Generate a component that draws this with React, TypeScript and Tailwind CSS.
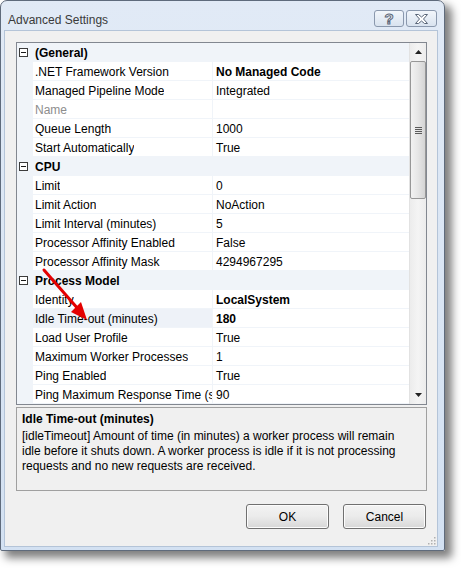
import React from "react";

type Row = { name: string; value: string; bold?: boolean; disabled?: boolean; selected?: boolean };
type Section = { title: string; rows: Row[] };

const sections: Section[] = [
  {
    title: "(General)",
    rows: [
      { name: ".NET Framework Version", value: "No Managed Code", bold: true },
      { name: "Managed Pipeline Mode", value: "Integrated" },
      { name: "Name", value: "", disabled: true },
      { name: "Queue Length", value: "1000" },
      { name: "Start Automatically", value: "True" },
    ],
  },
  {
    title: "CPU",
    rows: [
      { name: "Limit", value: "0" },
      { name: "Limit Action", value: "NoAction" },
      { name: "Limit Interval (minutes)", value: "5" },
      { name: "Processor Affinity Enabled", value: "False" },
      { name: "Processor Affinity Mask", value: "4294967295" },
    ],
  },
  {
    title: "Process Model",
    rows: [
      { name: "Identity", value: "LocalSystem", bold: true },
      { name: "Idle Time-out (minutes)", value: "180", bold: true, selected: true },
      { name: "Load User Profile", value: "True" },
      { name: "Maximum Worker Processes", value: "1" },
      { name: "Ping Enabled", value: "True" },
      { name: "Ping Maximum Response Time (seconds)", value: "90" },
    ],
  },
];

function MinusBox() {
  return (
    <div className="ml-[2px] w-[9px] h-[9px] border border-[#3c3c3c] bg-white flex items-center justify-center">
      <div className="w-[5px] h-[1px] bg-[#1a1a1a]" />
    </div>
  );
}

function CategoryRow({ title }: { title: string }) {
  return (
    <div className="h-[19px] flex items-center bg-[#f0f4f9]">
      <div className="w-[16px] h-full flex items-center">
        <MinusBox />
      </div>
      <div className="pl-[2px] font-bold text-[#000]">{title}</div>
    </div>
  );
}

function PropRow({ row }: { row: Row }) {
  return (
    <div className="h-[19px] flex bg-[#f0f4f9]">
      <div className="w-[16px] h-full" />
      <div
        className={
          "w-[179px] h-[18px] pl-[2px] pt-[2px] overflow-hidden whitespace-nowrap flex items-center " +
          (row.selected ? "bg-[#eef2f8]" : "bg-white") +
          (row.disabled ? " text-[#8d8d8d]" : " text-black")
        }
      >
        <span className="block overflow-hidden">{row.name}</span>
      </div>
      <div className="w-[1px] h-[18px] bg-[#f0f4f9]" />
      <div
        className={
          "flex-1 h-[18px] pl-[3px] pt-[2px] bg-white overflow-hidden whitespace-nowrap flex items-center text-black " +
          (row.bold ? "font-bold" : "")
        }
      >
        {row.value}
      </div>
    </div>
  );
}

function ScrollBar() {
  return (
    <div className="w-[17px] h-full bg-gradient-to-r from-[#ececec] via-[#f4f4f4] to-[#ececec] border-l border-[#e2e2e2] flex flex-col">
      <div className="h-[18px] flex items-center justify-center">
        <svg width="7" height="4" viewBox="0 0 7 4">
          <path d="M3.5 0 L7 4 L0 4 Z" fill="#222" />
        </svg>
      </div>
      <div className="h-[138px] rounded-[2px] border border-[#979797] bg-gradient-to-r from-[#f2f2f2] via-[#e6e6e6] to-[#d4d4d4] flex flex-col items-center justify-center gap-[1px]">
        <div className="w-[7px] h-[1px] bg-[#5a5a5a]" />
        <div className="w-[7px] h-[1px] bg-[#5a5a5a]" />
        <div className="w-[7px] h-[1px] bg-[#5a5a5a]" />
        <div className="w-[7px] h-[1px] bg-[#5a5a5a]" />
      </div>
      <div className="flex-1" />
      <div className="h-[18px] flex items-center justify-center">
        <svg width="7" height="4" viewBox="0 0 7 4">
          <path d="M0 0 L7 0 L3.5 4 Z" fill="#222" />
        </svg>
      </div>
    </div>
  );
}

function PropertyGrid() {
  return (
    <div className="ml-[11px] w-[411px] h-[363px] border border-[#828790] bg-white flex">
      <div className="w-[392px] h-full overflow-hidden">
        {sections.map((s) => (
          <div key={s.title}>
            <CategoryRow title={s.title} />
            {s.rows.map((r) => (
              <PropRow key={r.name} row={r} />
            ))}
          </div>
        ))}
      </div>
      <ScrollBar />
    </div>
  );
}

function TitleButton({ children, wide }: { children: React.ReactNode; wide?: boolean }) {
  return (
    <div
      className={
        "h-[17px] rounded-[3px] border border-[#8a98ad] bg-gradient-to-b from-[#f2f6fb] to-[#d9e3ef] flex items-center justify-center " +
        (wide ? "w-[31px]" : "w-[30px]")
      }
    >
      {children}
    </div>
  );
}

function Button({ label }: { label: string }) {
  return (
    <div className="w-[83px] h-[25px] rounded-[3px] border border-[#707070] bg-gradient-to-b from-[#f3f3f3] via-[#ebebeb] to-[#d7d7d7] flex items-center justify-center text-black shadow-[inset_0_0_0_1px_#fcfcfc]">
      {label}
    </div>
  );
}

export default function App() {
  return (
    <div
      className="relative w-[461px] h-[568px] bg-white overflow-hidden text-[12px]"
      style={{ fontFamily: '"Liberation Sans", Arial, sans-serif' }}
    >
      <div className="w-[445px] h-[551px] border border-[#5f6b7c] rounded-t-[7px] rounded-b-[2px] bg-gradient-to-b from-[#e1eaf6] to-[#d3e1f2] shadow-[6px_6px_9px_1px_rgba(0,0,0,0.5)] flex flex-col">
        {/* Title bar */}
        <div className="h-[29px] flex items-start pl-[7px] pr-[7px]">
          <div className="mt-[11px] text-[12px] leading-[16px] text-[#3a3a3a]">Advanced Settings</div>
          <div className="flex-1" />
          <div className="mt-[9px] flex gap-[2px]">
            <TitleButton>
              <span
                className="font-bold text-[15px] leading-[15px] text-white"
                style={{ WebkitTextStroke: "1px #5a6678" }}
              >
                ?
              </span>
            </TitleButton>
            <TitleButton wide>
              <svg width="15" height="10" viewBox="0 0 15 10">
                <path
                  d="M1.5 0.5 L4.5 0.5 L7.5 3 L10.5 0.5 L13.5 0.5 L9.5 5 L13.5 9.5 L10.5 9.5 L7.5 7 L4.5 9.5 L1.5 9.5 L5.5 5 Z"
                  fill="#ffffff"
                  stroke="#5a6678"
                  strokeWidth="1"
                  strokeLinejoin="round"
                />
              </svg>
            </TitleButton>
          </div>
        </div>
        {/* Client area */}
        <div className="ml-[3px] mr-[6px] mb-[3px] flex-1 border border-[#b4c4d8] bg-[#f0f0f0] pt-[11px] flex flex-col relative">
          <PropertyGrid />
          <div className="ml-[11px] mt-[2px] w-[411px] h-[84px] border border-[#a0a0a0] bg-[#f0f0f0] px-[5px] pt-[3px] text-black">
            <div className="font-bold leading-[16px]">Idle Time-out (minutes)</div>
            <div className="mt-[2px] leading-[15px]">
              <div>[idleTimeout] Amount of time (in minutes) a worker process will remain</div>
              <div>idle before it shuts down. A worker process is idle if it is not processing</div>
              <div>requests and no new requests are received.</div>
            </div>
          </div>
          <div className="mt-[13px] pr-[11px] flex justify-end gap-[14px]">
            <Button label="OK" />
            <Button label="Cancel" />
          </div>
          {/* resize grip */}
          <svg className="absolute right-[1px] bottom-[1px]" width="10" height="10" viewBox="0 0 10 10">
            {[
              [8, 2],
              [5, 5],
              [8, 5],
              [2, 8],
              [5, 8],
              [8, 8],
            ].map(([x, y], i) => (
              <rect key={i} x={x} y={y} width="1.5" height="1.5" fill="#b0b0b0" />
            ))}
          </svg>
        </div>
      </div>
      {/* Red annotation arrow */}
      <svg className="absolute left-0 top-0 pointer-events-none" width="461" height="568" viewBox="0 0 461 568">
        <line x1="44" y1="270" x2="79" y2="310" stroke="#e40000" strokeWidth="3" strokeLinecap="round" />
        <path d="M87 320 L71 312 L81 302 Z" fill="#e40000" />
      </svg>
    </div>
  );
}
